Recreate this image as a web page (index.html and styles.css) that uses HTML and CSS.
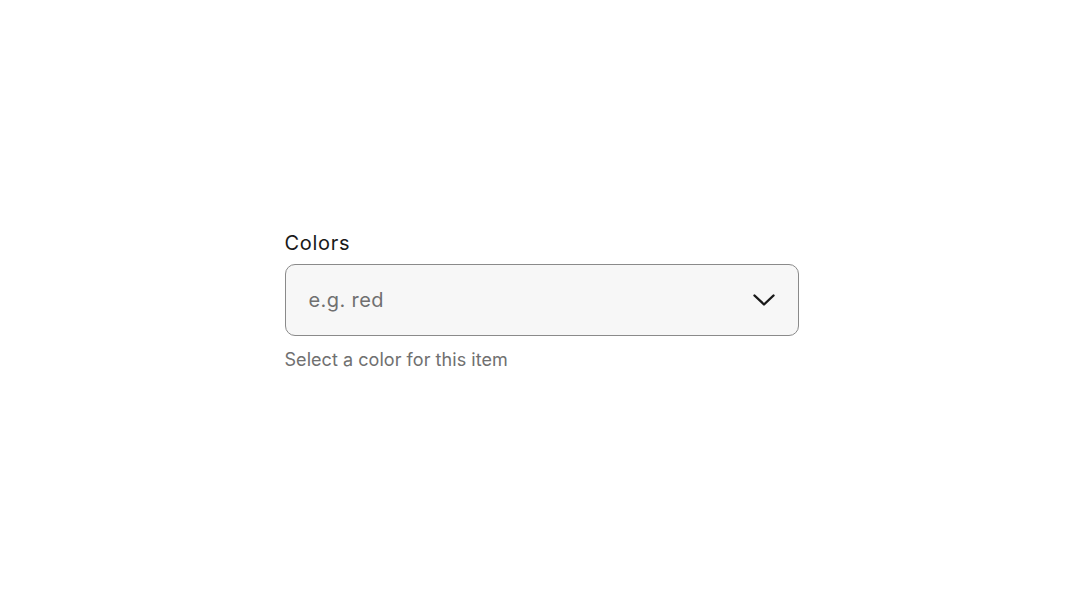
FILE: index.html
```html
<!DOCTYPE html>
<html>
<head>
<meta charset="utf-8">
<link rel="stylesheet" href="styles.css">
</head>
<body>
<main class="page">
  <div class="field">
    <label class="label" for="colors">Colors</label>
    <div class="select">
      <span class="placeholder">e.g. red</span>
      <svg class="chevron" width="24" height="24" viewBox="0 0 24 24" aria-hidden="true">
        <path d="M2.5 7.5 L12 16.5 L21.5 7.5" fill="none" stroke="#191919" stroke-width="2.4" stroke-linecap="round" stroke-linejoin="round"/>
      </svg>
    </div>
    <p class="helper">Select a color for this item</p>
  </div>
</main>
</body>
</html>
```

FILE: styles.css
```css
* { box-sizing: border-box; }
html, body { margin: 0; padding: 0; background: #ffffff; }
body { font-family: Inter, "Noto Sans", Arial, sans-serif; color: #191919; }
.page {
  height: 600px;
  padding-top: 2px;
  display: flex;
  align-items: center;
  justify-content: center;
}
.field {
  width: 514px;
  display: flex;
  flex-direction: column;
}
.label {
  font-size: 20px;
  line-height: 24px;
  letter-spacing: 0.7px;
  margin-bottom: 9px;
  color: #191919;
}
.select {
  height: 72px;
  border: 1px solid #8a8a8a;
  border-radius: 10px;
  background: #f7f7f7;
  display: flex;
  align-items: center;
  justify-content: space-between;
  padding: 0 22px 0 23px;
}
.placeholder {
  font-size: 20px;
  letter-spacing: 0.4px;
  color: #707070;
}
.chevron { display: block; }
.helper {
  margin: 12px 0 0;
  font-size: 18px;
  line-height: 24px;
  letter-spacing: 0.05px;
  color: #707070;
}
```
